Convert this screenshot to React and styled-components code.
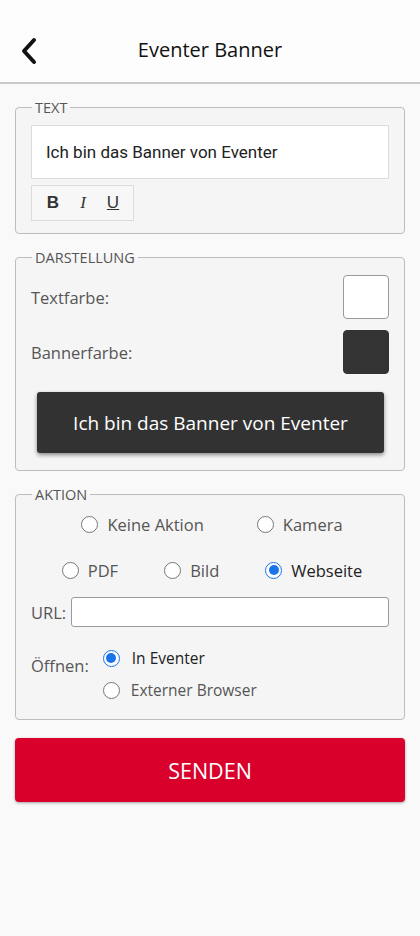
import React, {useState} from 'react';
import styled, {createGlobalStyle} from 'styled-components';

const GlobalStyle = createGlobalStyle`
  html, body {
    margin: 0;
    padding: 0;
    background: #f9f9f9;
  }
  body {
    font-family: "Open Sans", "Noto Sans", sans-serif;
    color: #555;
  }
  * { box-sizing: border-box; }
`;

const Page = styled.div`
  width: 420px;
  min-height: 936px;
  background: #f9f9f9;
  padding-bottom: 40px;
`;

const Header = styled.header`
  height: 84px;
  display: flex;
  align-items: center;
  justify-content: center;
  position: relative;
  background: #fdfdfd;
  border-bottom: 2px solid #c9c9c9;
`;

const BackButton = styled.button`
  position: absolute;
  left: 14px;
  top: 34px;
  width: 30px;
  height: 34px;
  border: 0;
  background: none;
  padding: 0;
  display: flex;
  align-items: center;
  justify-content: center;
`;

const Title = styled.h1`
  margin: 0;
  font-size: 20px;
  font-weight: 400;
  color: #111;
  padding-top: 16px;
`;

const Content = styled.div`
  padding: 15px 15px 0 15px;
  display: flex;
  flex-direction: column;
  gap: 15px;
`;

const Group = styled.fieldset`
  margin: 0;
  border: 1px solid #bdbdbd;
  border-radius: 4px;
  background: #f5f5f5;
  padding: ${p => p.$pad || '9px 15px 12px 15px'};
  min-width: 0;
`;

const Legend = styled.legend`
  padding: 0 3px;
  margin-left: 1px;
  font-size: 14.5px;
  line-height: 17px;
  color: #555;
`;

const TextInput = styled.div`
  height: 54px;
  border: 1px solid #dcdcdc;
  background: #fff;
  display: flex;
  align-items: center;
  padding-left: 14px;
  font-family: Roboto, "Liberation Sans", sans-serif;
  font-size: 17px;
  color: #222;
`;

const Toolbar = styled.div`
  margin-top: 6px;
  width: 103px;
  height: 36px;
  border: 1px solid #dcdcdc;
  background: #f7f7f7;
  display: flex;
  align-items: center;
  gap: 16px;
  padding-left: 14px;
`;

const ToolButton = styled.span`
  font-family: ${p => p.$italic ? '"Liberation Serif", serif' : '"Liberation Sans", sans-serif'};
  font-weight: ${p => p.$bold ? 700 : 400};
  font-style: ${p => p.$italic ? 'italic' : 'normal'};
  text-decoration: ${p => p.$underline ? 'underline' : 'none'};
  font-size: 17px;
  color: #333;
  width: 14px;
  text-align: center;
`;

const ColorRow = styled.div`
  display: flex;
  align-items: center;
  justify-content: space-between;
  margin-bottom: 11px;
  font-size: 16.5px;
  color: #555;
`;

const Swatch = styled.div`
  width: 46px;
  height: 44px;
  border-radius: 4px;
  background: ${p => p.$color};
  border: 1px solid ${p => p.$border || '#999'};
`;

const BannerPreview = styled.div`
  margin: 18px 5px 0 6px;
  height: 61px;
  background: #323232;
  border-radius: 3px;
  box-shadow: 0 2px 4px rgba(0, 0, 0, 0.45);
  display: flex;
  align-items: center;
  justify-content: center;
  color: #fff;
  font-size: 19px;
`;

const RadioRow = styled.div`
  display: flex;
  justify-content: center;
  gap: ${p => p.$gap}px;
  padding-left: ${p => p.$shift || 0}px;
  margin-bottom: ${p => p.$mb || 0}px;
`;

const RadioLabel = styled.label`
  display: flex;
  align-items: center;
  gap: ${p => p.$gap || 9}px;
  font-size: ${p => p.$size || 16.5}px;
  color: ${p => p.$checked ? '#222' : '#555'};
  cursor: pointer;
  height: 26px;
`;

const Circle = styled.span`
  width: 17px;
  height: 17px;
  border-radius: 50%;
  border: 1.5px solid ${p => p.$checked ? '#1a73e8' : '#777'};
  background: #fff;
  display: flex;
  align-items: center;
  justify-content: center;
  flex-shrink: 0;

  &::after {
    content: '';
    display: ${p => p.$checked ? 'block' : 'none'};
    width: 10px;
    height: 10px;
    border-radius: 50%;
    background: #1a73e8;
  }
`;

const UrlRow = styled.div`
  display: flex;
  align-items: center;
  gap: 5px;
  font-size: 16.5px;
  color: #555;
  margin-top: 14px;
`;

const UrlInput = styled.div`
  flex: 1;
  height: 30px;
  border: 1px solid #9a9a9a;
  border-radius: 3px;
  background: #fff;
`;

const OpenRow = styled.div`
  display: flex;
  align-items: flex-start;
  gap: 14px;
  margin-top: 18px;
  font-size: 16.5px;
  color: #555;
`;

const OpenLabel = styled.span`
  padding-top: 9px;
`;

const OpenOptions = styled.div`
  display: flex;
  flex-direction: column;
  gap: 6px;
`;

const SendButton = styled.button`
  margin-top: 3px;
  height: 64px;
  border: 0;
  border-radius: 4px;
  background: #d9002c;
  color: #fff;
  font-family: "Open Sans", "Noto Sans", sans-serif;
  font-size: 21.5px;
  box-shadow: 0 1px 3px rgba(0, 0, 0, 0.35);
`;

function Radio({label, checked, size, gap}) {
  return (
    <RadioLabel $checked={checked} $size={size} $gap={gap}>
      <Circle $checked={checked}/>
      {label}
    </RadioLabel>
  );
}

export default function App() {
  const [action] = useState('web');
  const [open] = useState('inside');

  return (
    <Page>
      <GlobalStyle/>
      <Header>
        <BackButton aria-label="Zurück">
          <svg width="20" height="28" viewBox="0 0 20 28">
            <polyline points="15,3 5,14 15,25" fill="none" stroke="#111"
                      strokeWidth="4" strokeLinecap="round" strokeLinejoin="round"/>
          </svg>
        </BackButton>
        <Title>Eventer Banner</Title>
      </Header>

      <Content>
        <Group>
          <Legend>TEXT</Legend>
          <TextInput>Ich bin das Banner von Eventer</TextInput>
          <Toolbar>
            <ToolButton $bold>B</ToolButton>
            <ToolButton $italic>I</ToolButton>
            <ToolButton $underline>U</ToolButton>
          </Toolbar>
        </Group>

        <Group $pad="9px 15px 17px 15px">
          <Legend>DARSTELLUNG</Legend>
          <ColorRow>
            Textfarbe:
            <Swatch $color="#fff"/>
          </ColorRow>
          <ColorRow>
            Bannerfarbe:
            <Swatch $color="#333" $border="#333"/>
          </ColorRow>
          <BannerPreview>Ich bin das Banner von Eventer</BannerPreview>
        </Group>

        <Group $pad="8px 15px 16px 15px">
          <Legend>AKTION</Legend>
          <RadioRow $gap={53} $shift={4} $mb={20}>
            <Radio label="Keine Aktion" checked={action === 'none'}/>
            <Radio label="Kamera" checked={action === 'camera'}/>
          </RadioRow>
          <RadioRow $gap={46} $shift={4}>
            <Radio label="PDF" checked={action === 'pdf'}/>
            <Radio label="Bild" checked={action === 'image'}/>
            <Radio label="Webseite" checked={action === 'web'}/>
          </RadioRow>
          <UrlRow>
            URL:
            <UrlInput/>
          </UrlRow>
          <OpenRow>
            <OpenLabel>Öffnen:</OpenLabel>
            <OpenOptions>
              <Radio label="In Eventer" size={15.5} gap={12} checked={open === 'inside'}/>
              <Radio label="Externer Browser" size={15.5} gap={11} checked={open === 'browser'}/>
            </OpenOptions>
          </OpenRow>
        </Group>

        <SendButton>SENDEN</SendButton>
      </Content>
    </Page>
  );
}
